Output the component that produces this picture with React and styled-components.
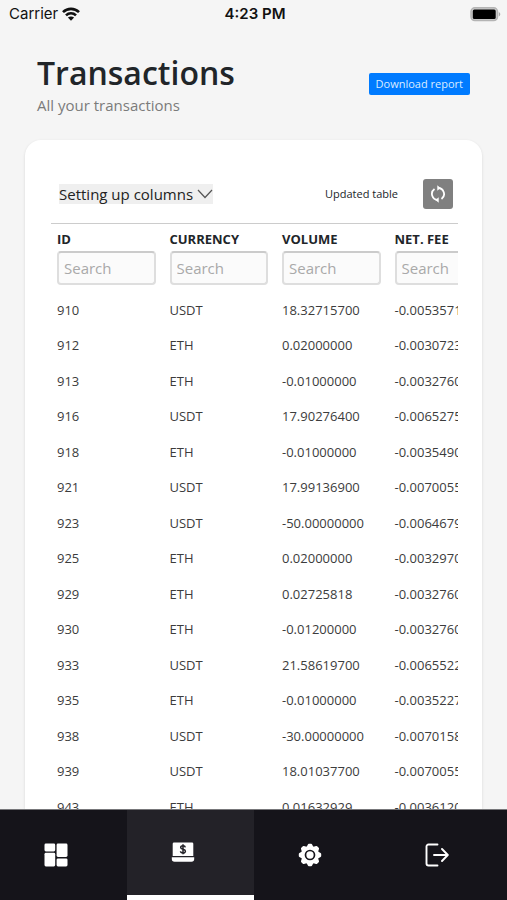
import React from "react";
import styled, { createGlobalStyle } from "styled-components";

const GlobalStyle = createGlobalStyle`
  *, *::before, *::after { box-sizing: border-box; }
  body {
    margin: 0;
    background: #f5f5f5;
    color: #212529;
    font-family: "Open Sans", "Noto Sans", sans-serif;
  }
  button, input { font-family: inherit; }
`;

const Screen = styled.div`
  display: flex;
  flex-direction: column;
  height: 100vh;
  overflow: hidden;
`;

const StatusBar = styled.header`
  display: grid;
  grid-template-columns: 1fr auto 1fr;
  align-items: center;
  flex: none;
  height: 28px;
  padding: 0 6px 0 9px;
  color: #111;
  font: 400 15px/20px Inter, sans-serif;
`;

const Carrier = styled.span`
  display: flex;
  align-items: center;
  gap: 4px;
`;

const Clock = styled.time`
  font-weight: 600;
`;

const BatteryIcon = styled.svg`
  justify-self: end;
`;

const Content = styled.main`
  display: flex;
  flex-direction: column;
  flex: 1;
  min-height: 0;
  padding: 24px 25px 0;
`;

const PageHeader = styled.div`
  display: flex;
  justify-content: space-between;
  align-items: flex-start;
  flex: none;
  height: 88px;
  padding: 0 12px;
`;

const Title = styled.h1`
  margin: 0;
  font-size: 32px;
  font-weight: 600;
  line-height: 42px;
`;

const Subtitle = styled.p`
  margin: 1px 0 0;
  color: #7b7b7b;
  font-size: 15px;
  line-height: 20px;
`;

const DownloadButton = styled.button`
  height: 22px;
  margin-top: 21px;
  padding: 0 7px;
  border: 0;
  border-radius: 2px;
  background: #007bff;
  color: #dcecff;
  font-size: 11px;
  line-height: 22px;
`;

const Card = styled.section`
  flex: 1;
  min-height: 0;
  padding: 39px 24px 0 26px;
  overflow: hidden;
  border-radius: 16px 16px 0 0;
  background: #fff;
  box-shadow: 0 1px 3px rgba(0, 0, 0, 0.12);
`;

const Toolbar = styled.div`
  display: flex;
  align-items: center;
  height: 44px;
  padding: 0 5px 14px 8px;
`;

const ColumnsButton = styled.button`
  display: flex;
  align-items: center;
  gap: 4px;
  height: 20px;
  padding: 0;
  border: 0;
  background: #efefef;
  color: #222;
  font-size: 15px;
  line-height: 20px;
`;

const Updated = styled.span`
  margin-left: auto;
  font-size: 11px;
  line-height: 20px;
`;

const RefreshButton = styled.button`
  display: grid;
  place-items: center;
  width: 30px;
  height: 30px;
  margin-left: 25px;
  padding: 0;
  border: 0;
  border-radius: 3px;
  background: #808080;
  color: #fff;
`;

const TableScroll = styled.div`
  overflow: hidden;
  border-top: 1px solid #ccc;
`;

const Table = styled.table`
  width: 110%;
  min-width: 450px;
  table-layout: fixed;
  border-collapse: collapse;
  font-size: 13px;
`;

const HeadCell = styled.th`
  height: 68px;
  padding: 5px 8px 0 6px;
  text-align: left;
  vertical-align: top;
  font-size: 13px;
  font-weight: 700;
  line-height: 20px;
  white-space: nowrap;
`;

const SearchInput = styled.input`
  display: block;
  width: 100%;
  height: 34px;
  margin-top: 2px;
  padding: 0 5px;
  border: 2px solid #dedede;
  border-top-color: #cbcbcb;
  border-radius: 4px;
  background: #fbfbfb;
  color: #333;
  font-size: 15px;
  &::placeholder { color: #a9a9a9; opacity: 1; }
`;

const Row = styled.tr`
  height: 35px;
  &:nth-child(even) { height: 36px; }
`;

const Cell = styled.td`
  padding: 0 0 0 6px;
  color: #3c3c3c;
  line-height: 20px;
  white-space: nowrap;
`;

const BottomNav = styled.nav`
  display: grid;
  grid-template-columns: repeat(4, 1fr);
  flex: none;
  height: 91px;
  border-top: 1px solid #77777a;
  background: #15141a;
`;

const NavLink = styled.a`
  display: grid;
  place-items: center;
  padding-right: 14px;
  border-bottom: ${(p) => (p.$active ? "5px solid #fff" : "0")};
  background: ${(p) => (p.$active ? "#232228" : "transparent")};
  color: #fff;
`;

const columns = ["ID", "CURRENCY", "VOLUME", "NET. FEE"];

const transactions = [
  ["910", "USDT", "18.32715700", "-0.00535710"],
  ["912", "ETH", "0.02000000", "-0.00307230"],
  ["913", "ETH", "-0.01000000", "-0.00327600"],
  ["916", "USDT", "17.90276400", "-0.00652750"],
  ["918", "ETH", "-0.01000000", "-0.00354900"],
  ["921", "USDT", "17.99136900", "-0.00700550"],
  ["923", "USDT", "-50.00000000", "-0.00646790"],
  ["925", "ETH", "0.02000000", "-0.00329700"],
  ["929", "ETH", "0.02725818", "-0.00327600"],
  ["930", "ETH", "-0.01200000", "-0.00327600"],
  ["933", "USDT", "21.58619700", "-0.00655220"],
  ["935", "ETH", "-0.01000000", "-0.00352270"],
  ["938", "USDT", "-30.00000000", "-0.00701580"],
  ["939", "USDT", "18.01037700", "-0.00700550"],
  ["943", "ETH", "0.01632929", "-0.00361200"],
];

const WifiIcon = () => (
  <svg width="18" height="14" viewBox="0 0 18 14" fill="none" stroke="#111" strokeWidth="2.6" aria-hidden="true">
    <path d="M1 5.2C5.5.7 12.500.7 17 5.200" />
    <path d="M4 8.300C6.800 5.500 11.200 5.500 14 8.300" />
    <path d="M9 13.700 5.900 10.600C7.700 9 10.300 9 12.100 10.600Z" fill="#111" stroke="none" />
  </svg>
);

const Battery = () => (
  <BatteryIcon width="31" height="15" viewBox="0 0 31 15" role="img" aria-label="Battery full">
    <rect x="1" y="0.800" width="26.500" height="12.800" rx="3.800" fill="#ccc" stroke="#b4b4b4" strokeWidth="1.500" />
    <rect x="2.800" y="2.500" width="22.900" height="9.400" rx="1.500" fill="#000" />
    <path d="M28.800 5c2 1 2 3.600 0 4.600Z" fill="#aaa" />
  </BatteryIcon>
);

const ChevronIcon = () => (
  <svg width="16" height="10" viewBox="0 0 16 10" fill="none" stroke="#555" strokeWidth="1.200" aria-hidden="true">
    <path d="M1 1l7 7.500L15 1" />
  </svg>
);

const RefreshIcon = () => (
  <svg width="16" height="18" viewBox="0 0 16 18" fill="none" stroke="#fff" strokeWidth="1.800" aria-hidden="true">
    <path d="M8 3A6 6 0 0 1 11.500 13.900M8 15A6 6 0 0 1 4.500 4.100" />
    <path d="M7.300.3v5.400L10.500 3ZM8.700 12.300v5.400L5.500 15Z" fill="#fff" stroke="none" />
  </svg>
);

const DashboardIcon = () => (
  <svg width="24" height="24" viewBox="0 0 24 24" fill="#fff" aria-hidden="true">
    <rect x="0.500" y="0.500" width="10.700" height="7.900" rx="1.400" />
    <rect x="0.500" y="9.800" width="10.700" height="13.700" rx="1.400" />
    <rect x="12.600" y="0.500" width="10.900" height="13.500" rx="1.400" />
    <rect x="12.600" y="15.400" width="10.900" height="8.100" rx="1.400" />
  </svg>
);

const LaptopIcon = () => (
  <svg width="24" height="22" viewBox="0 0 24 22" aria-hidden="true">
    <path d="M3 .5h18a1.300 1.300 0 0 1 1.300 1.300V14H1.700V1.800A1.300 1.300 0 0 1 3 .5Z" fill="#fff" />
    <path d="M.8 15.300h22.400v1.800a2.700 2.700 0 0 1-2.700 2.700h-17a2.700 2.700 0 0 1-2.700-2.700Z" fill="#fff" />
    <path d="M14.300 5.300C14 3.200 9.700 3.100 9.700 5.400c0 2.500 4.700 1.300 4.700 3.900 0 2.400-4.700 2.300-4.900 0M12 2.300v10" fill="none" stroke="#222127" strokeWidth="1.500" />
  </svg>
);

const teeth = [0, 45, 90, 135, 180, 225, 270, 315];

const GearIcon = () => (
  <svg width="24" height="24" viewBox="0 0 24 24" fill="#fff" aria-hidden="true">
    {teeth.map((angle) => (
      <path key={angle} d="M8.300 4.500 9.900 1.400Q10.200.8 10.900.8h2.200q.7 0 1 .6l1.600 3.100Z" transform={`rotate(${angle} 12 12)`} />
    ))}
    <circle cx="12" cy="12" r="8.900" />
    <circle cx="12" cy="12" r="4.500" stroke="#15141a" strokeWidth="1.700" />
  </svg>
);

const LogoutIcon = () => (
  <svg width="24" height="24" viewBox="0 0 24 24" fill="none" stroke="#fff" strokeWidth="1.900" strokeLinecap="round" strokeLinejoin="round" aria-hidden="true">
    <path d="M12.500 1.500H3.500a2 2 0 0 0-2 2v17a2 2 0 0 0 2 2h9" />
    <path d="M9 12h13.500M17 6l5.800 6-5.800 6" />
  </svg>
);

const navItems = [
  { label: "Dashboard", Icon: DashboardIcon },
  { label: "Transactions", Icon: LaptopIcon, active: true },
  { label: "Settings", Icon: GearIcon },
  { label: "Log out", Icon: LogoutIcon },
];

export default function App() {
  return (
    <Screen>
      <GlobalStyle />
      <StatusBar>
        <Carrier>Carrier <WifiIcon /></Carrier>
        <Clock>4:23 PM</Clock>
        <Battery />
      </StatusBar>
      <Content>
        <PageHeader>
          <div>
            <Title>Transactions</Title>
            <Subtitle>All your transactions</Subtitle>
          </div>
          <DownloadButton type="button">Download report</DownloadButton>
        </PageHeader>
        <Card>
          <Toolbar>
            <ColumnsButton type="button">Setting up columns <ChevronIcon /></ColumnsButton>
            <Updated>Updated table</Updated>
            <RefreshButton type="button" aria-label="Refresh table"><RefreshIcon /></RefreshButton>
          </Toolbar>
          <TableScroll>
            <Table>
              <thead>
                <tr>
                  {columns.map((name) => (
                    <HeadCell key={name} scope="col">
                      {name}
                      <SearchInput type="text" placeholder="Search" aria-label={`Search ${name}`} />
                    </HeadCell>
                  ))}
                </tr>
              </thead>
              <tbody>
                {transactions.map((row) => (
                  <Row key={row[0]}>
                    {row.map((value, i) => <Cell key={columns[i]}>{value}</Cell>)}
                  </Row>
                ))}
              </tbody>
            </Table>
          </TableScroll>
        </Card>
      </Content>
      <BottomNav aria-label="Main">
        {navItems.map(({ label, Icon, active }) => (
          <NavLink key={label} href="#" aria-label={label} aria-current={active ? "page" : undefined} $active={active}>
            <Icon />
          </NavLink>
        ))}
      </BottomNav>
    </Screen>
  );
}
